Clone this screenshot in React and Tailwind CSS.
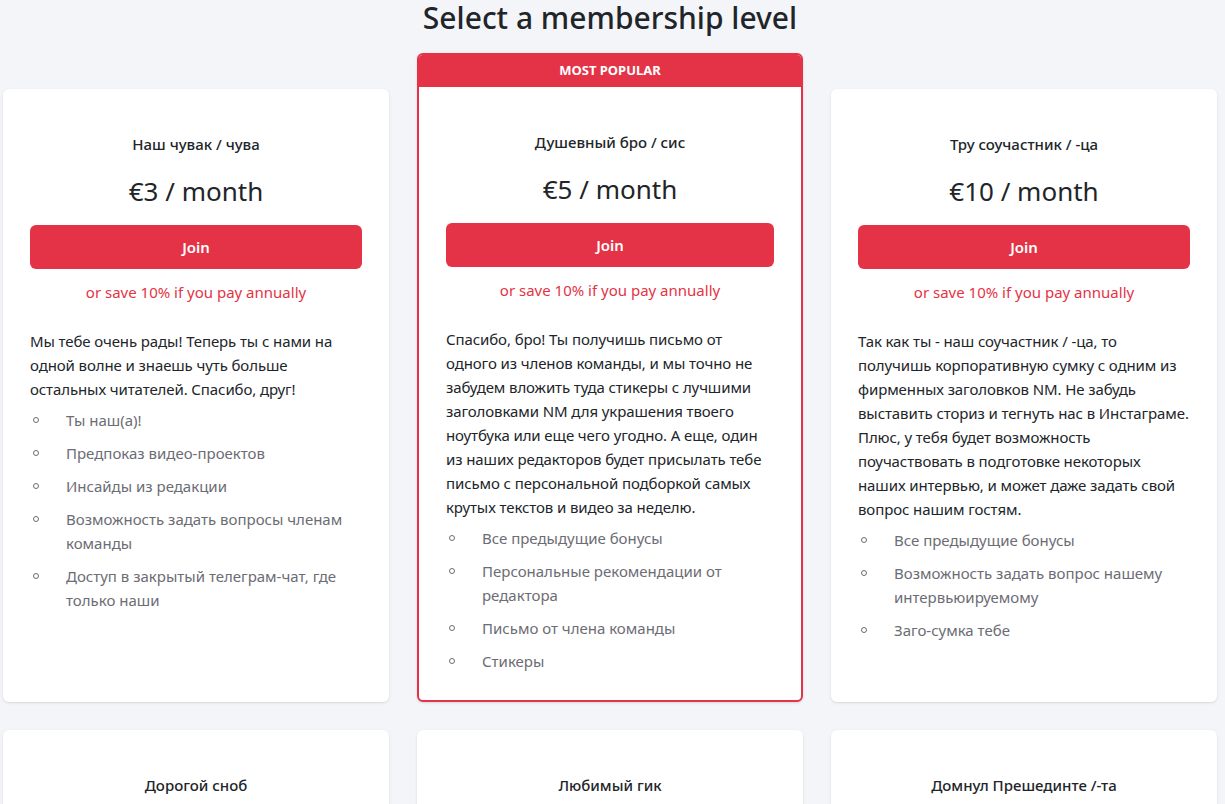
const plans = [
  {
    name: "Наш чувак / чува",
    price: "€3 / month",
    lines: [
      "Мы тебе очень рады! Теперь ты с нами на",
      "одной волне и знаешь чуть больше",
      "остальных читателей. Спасибо, друг!",
    ],
    perks: [
      "Ты наш(а)!",
      "Предпоказ видео-проектов",
      "Инсайды из редакции",
      "Возможность задать вопросы членам команды",
      "Доступ в закрытый телеграм-чат, где только наши",
    ],
  },
  {
    name: "Душевный бро / сис",
    price: "€5 / month",
    popular: true,
    lines: [
      "Спасибо, бро! Ты получишь письмо от",
      "одного из членов команды, и мы точно не",
      "забудем вложить туда стикеры с лучшими",
      "заголовками NM для украшения твоего",
      "ноутбука или еще чего угодно. А еще, один",
      "из наших редакторов будет присылать тебе",
      "письмо с персональной подборкой самых",
      "крутых текстов и видео за неделю.",
    ],
    perks: [
      "Все предыдущие бонусы",
      "Персональные рекомендации от редактора",
      "Письмо от члена команды",
      "Стикеры",
    ],
  },
  {
    name: "Тру соучастник / -ца",
    price: "€10 / month",
    lines: [
      "Так как ты - наш соучастник / -ца, то",
      "получишь корпоративную сумку с одним из",
      "фирменных заголовков NM. Не забудь",
      "выставить сториз и тегнуть нас в Инстаграме.",
      "Плюс, у тебя будет возможность",
      "поучаствовать в подготовке некоторых",
      "наших интервью, и может даже задать свой",
      "вопрос нашим гостям.",
    ],
    perks: [
      "Все предыдущие бонусы",
      "Возможность задать вопрос нашему интервьюируемому",
      "Заго-сумка тебе",
    ],
  },
];

const moreplans = [
  { name: "Дорогой сноб" },
  { name: "Любимый гик" },
  { name: "Домнул Прешединте /-та" },
];

function PlanBody({ plan }) {
  return (
    <div className="px-[27px] pt-[43px] pb-[27px]">
      <h3 className="text-center text-[15px] leading-[24px] font-medium text-[#212529]">{plan.name}</h3>
      {plan.price && (
        <>
          <div className="mt-[17px] text-center text-[26px] leading-[36px] text-[#212529]">{plan.price}</div>
          <button className="mt-[16px] w-full h-[44px] rounded-[6px] bg-[#e43346] text-white text-[15px] font-semibold">
            Join
          </button>
          <p className="mt-[11px] text-center text-[15px] leading-[24px] text-[#e43346]">or save 10% if you pay annually</p>
          <p className="mt-[25px] text-[15px] leading-[24px] tracking-[-0.1px] text-[#212529]">
            {plan.lines.map((l) => (
              <span key={l} className="block whitespace-nowrap">{l}</span>
            ))}
          </p>
          <ul className="mt-[7px] space-y-[9px]">
            {plan.perks.map((p) => (
              <li key={p} className="flex text-[15px] leading-[24px] text-[#6c6c74]">
                <span className="w-[36px] shrink-0 flex items-center h-[24px] pl-[3px]">
                  <span className="w-[6px] h-[6px] rounded-full border border-[#6c6c74]"></span>
                </span>
                <span>{p}</span>
              </li>
            ))}
          </ul>
        </>
      )}
    </div>
  );
}

export default function App() {
  return (
    <div
      className="min-h-screen bg-[#f4f5f9] pl-[3px] pr-[8px]"
      style={{ fontFamily: '"Noto Sans", "Open Sans", sans-serif' }}
    >
      <h1 className="text-center text-[30px] leading-[36px] font-medium text-[#212529]">Select a membership level</h1>
      <div className="mt-[17px] grid grid-cols-3 gap-x-[28px] gap-y-[28px]">
        {plans.map((plan) =>
          plan.popular ? (
            <div key={plan.name} className="rounded-[6px] border-2 border-[#e43346] bg-white shadow-sm overflow-hidden">
              <div className="h-[32px] bg-[#e43346] flex items-center justify-center text-white text-[13px] font-bold">
                MOST POPULAR
              </div>
              <PlanBody plan={plan} />
            </div>
          ) : (
            <div key={plan.name} className="mt-[36px] rounded-[6px] bg-white shadow-sm">
              <PlanBody plan={plan} />
            </div>
          )
        )}
        {moreplans.map((plan) => (
          <div key={plan.name} className="rounded-[6px] bg-white shadow-sm h-[300px]">
            <PlanBody plan={plan} />
          </div>
        ))}
      </div>
    </div>
  );
}
